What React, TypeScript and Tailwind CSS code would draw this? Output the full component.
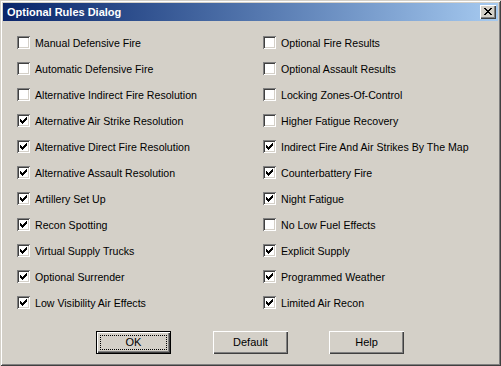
import React from "react";

const leftItems: [string, boolean][] = [
  ["Manual Defensive Fire", false],
  ["Automatic Defensive Fire", false],
  ["Alternative Indirect Fire Resolution", false],
  ["Alternative Air Strike Resolution", true],
  ["Alternative Direct Fire Resolution", true],
  ["Alternative Assault Resolution", true],
  ["Artillery Set Up", true],
  ["Recon Spotting", true],
  ["Virtual Supply Trucks", true],
  ["Optional Surrender", true],
  ["Low Visibility Air Effects", true],
];

const rightItems: [string, boolean][] = [
  ["Optional Fire Results", false],
  ["Optional Assault Results", false],
  ["Locking Zones-Of-Control", false],
  ["Higher Fatigue Recovery", false],
  ["Indirect Fire And Air Strikes By The Map", true],
  ["Counterbattery Fire", true],
  ["Night Fatigue", true],
  ["No Low Fuel Effects", false],
  ["Explicit Supply", true],
  ["Programmed Weather", true],
  ["Limited Air Recon", true],
];

function CheckMark() {
  const px: [number, number][] = [
    [6, 0],
    [5, 1], [6, 1],
    [0, 2], [4, 2], [5, 2], [6, 2],
    [0, 3], [1, 3], [3, 3], [4, 3], [5, 3],
    [0, 4], [1, 4], [2, 4], [3, 4], [4, 4],
    [1, 5], [2, 5], [3, 5],
    [2, 6],
  ];
  return (
    <svg width="7" height="7" viewBox="0 0 7 7" shapeRendering="crispEdges">
      {px.map(([x, y], i) => (
        <rect key={i} x={x} y={y} width="1" height="1" fill="#000" />
      ))}
    </svg>
  );
}

function CloseGlyph() {
  const rows = [
    "xx....xx",
    ".xx..xx.",
    "..xxxx..",
    "...xx...",
    "..xxxx..",
    ".xx..xx.",
    "xx....xx",
  ];
  const px: [number, number][] = [];
  rows.forEach((r, y) =>
    r.split("").forEach((c, x) => {
      if (c === "x") px.push([x, y]);
    })
  );
  return (
    <svg width="8" height="7" viewBox="0 0 8 7" shapeRendering="crispEdges">
      {px.map(([x, y], i) => (
        <rect key={i} x={x} y={y} width="1" height="1" fill="#000" />
      ))}
    </svg>
  );
}

function Check({ label, checked }: { label: string; checked: boolean }) {
  return (
    <div className="flex items-start h-[26px]">
      <div className="w-[13px] h-[13px] shrink-0 bg-white shadow-[inset_1px_1px_#808080,inset_-1px_-1px_#ffffff,inset_2px_2px_#404040,inset_-2px_-2px_#d4d0c8] flex items-start justify-start">
        {checked && (
          <div className="mt-[3px] ml-[3px] flex">
            <CheckMark />
          </div>
        )}
      </div>
      <span className="ml-[5px] mt-[1px] text-[10.6px] leading-[13px] text-black whitespace-nowrap">
        {label}
      </span>
    </div>
  );
}

function Button({ label, isDefault }: { label: string; isDefault?: boolean }) {
  if (isDefault) {
    return (
      <div className="w-[75px] h-[23px] border border-black">
        <div className="w-full h-full shadow-[inset_1px_1px_#ffffff,inset_-1px_-1px_#404040,inset_-2px_-2px_#808080] p-[3px]">
          <div className="w-full h-full border border-dotted border-black flex items-center justify-center text-[11px] leading-none text-black pb-[1px]">
            {label}
          </div>
        </div>
      </div>
    );
  }
  return (
    <div className="w-[75px] h-[23px] shadow-[inset_1px_1px_#ffffff,inset_-1px_-1px_#404040,inset_-2px_-2px_#808080] flex items-center justify-center text-[11px] leading-none text-black pb-[1px]">
      {label}
    </div>
  );
}

export default function App() {
  return (
    <div className="w-[501px] h-[366px] bg-[#d4d0c8] shadow-[inset_1px_1px_#d4d0c8,inset_-1px_-1px_#404040,inset_2px_2px_#ffffff,inset_-2px_-2px_#808080] p-[3px] flex flex-col font-['Liberation_Sans',Arial,sans-serif] overflow-hidden">
      <div className="h-[18px] shrink-0 bg-gradient-to-r from-[#0a246a] to-[#a6caf0] flex items-center justify-between pl-[4px] pr-[2px]">
        <span className="text-white font-bold text-[11px] leading-none whitespace-nowrap">
          Optional Rules Dialog
        </span>
        <div className="w-[16px] h-[14px] bg-[#d4d0c8] shadow-[inset_1px_1px_#ffffff,inset_-1px_-1px_#404040,inset_-2px_-2px_#808080] flex items-center justify-center pb-[1px]">
          <CloseGlyph />
        </div>
      </div>
      <div className="pl-[14px] pt-[15px] flex flex-col">
        <div className="flex">
          <div className="w-[246px] flex flex-col">
            {leftItems.map(([l, c]) => (
              <Check key={l} label={l} checked={c} />
            ))}
          </div>
          <div className="flex flex-col">
            {rightItems.map(([l, c]) => (
              <Check key={l} label={l} checked={c} />
            ))}
          </div>
        </div>
        <div className="flex mt-[9px] ml-[79px]">
          <Button label="OK" isDefault />
          <div className="ml-[42px]">
            <Button label="Default" />
          </div>
          <div className="ml-[41px]">
            <Button label="Help" />
          </div>
        </div>
      </div>
    </div>
  );
}
